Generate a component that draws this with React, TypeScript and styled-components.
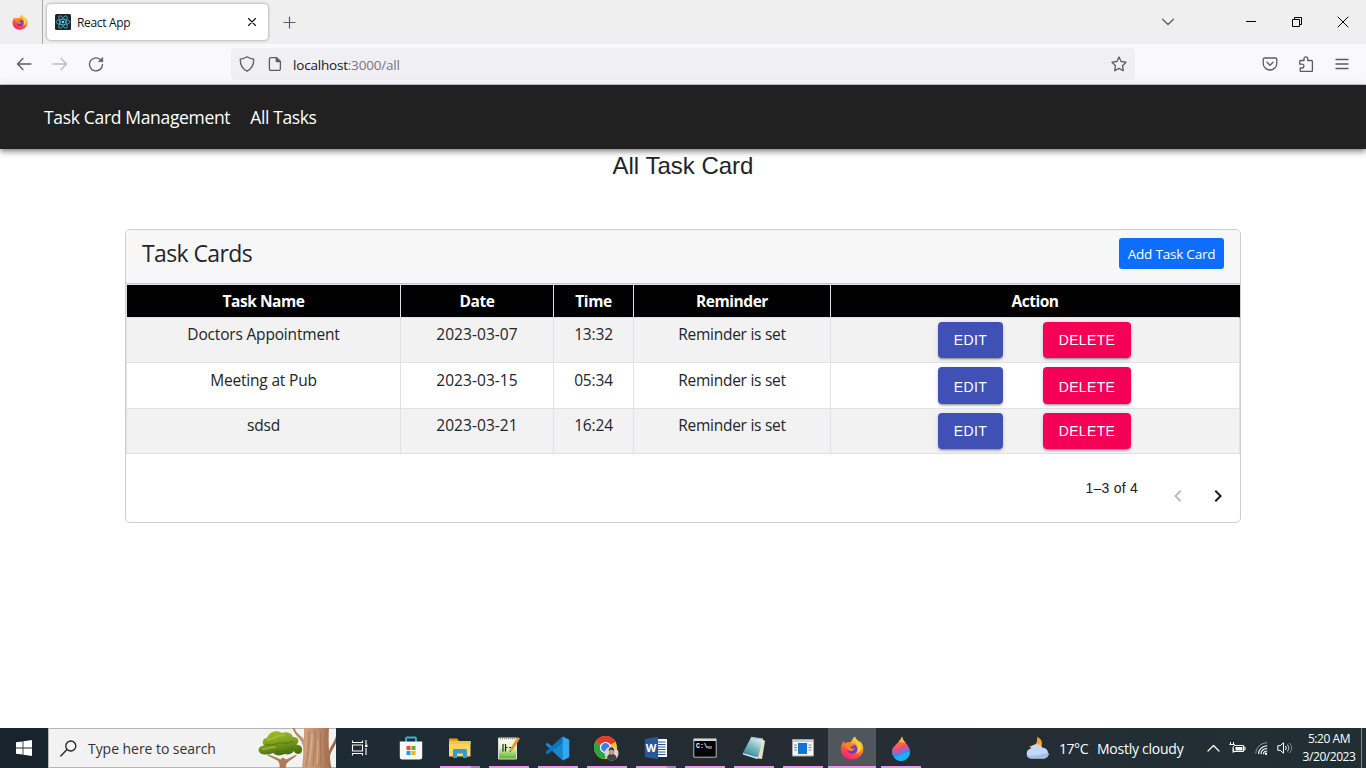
import React from 'react';
import styled, { createGlobalStyle, css } from 'styled-components';

const ui = "'Open Sans', 'Noto Sans', sans-serif";
const arial = "'Liberation Sans', Arial, sans-serif";

const GlobalStyle = createGlobalStyle`
  * { box-sizing: border-box; }
  body { margin: 0; background: #fff; font-family: ${ui}; overflow: hidden; }
  svg { display: block; flex: none; }
`;

const Screen = styled.div`
  width: 1366px;
  height: 768px;
  display: flex;
  flex-direction: column;
  background: #fff;
  overflow: hidden;
`;

/* ---------- browser chrome ---------- */
const TabStrip = styled.div`
  height: 44px;
  flex: none;
  display: flex;
  align-items: stretch;
  background: #efefef;
`;
const FirefoxView = styled.div`
  width: 43px;
  display: flex;
  align-items: center;
  padding-left: 12px;
  border-right: 1px solid #a9a9ab;
`;
const Tab = styled.div`
  width: 221px;
  height: 36px;
  margin: 4px 0 0 4px;
  padding: 0 11px 0 8px;
  display: flex;
  align-items: center;
  background: #fff;
  border-radius: 4px;
  box-shadow: 0 0 3px rgba(0, 0, 0, 0.45);
`;
const TabTitle = styled.span`
  flex: 1;
  margin-left: 6px;
  font-size: 12px;
  letter-spacing: -0.32px;
  color: #15141a;
`;
const StripButton = styled.div<{ $left: number }>`
  display: flex;
  align-items: center;
  margin-left: ${(p) => p.$left}px;
`;
const WindowControls = styled.div`
  margin-left: auto;
  display: flex;
  align-items: center;
  padding-right: 17px;
  gap: 34px;
`;
const ListTabs = styled.div`
  margin-right: 36px;
`;
const Toolbar = styled.div`
  height: 41px;
  flex: none;
  display: flex;
  align-items: center;
  background: #f9f9fb;
  border-bottom: 1px solid #ccccce;
`;
const NavButtons = styled.div`
  width: 231px;
  display: flex;
  gap: 20px;
  padding-left: 16px;
`;
const UrlBar = styled.div`
  width: 904px;
  height: 32px;
  display: flex;
  align-items: center;
  padding: 0 8px;
  border-radius: 4px;
  background: #f0f0f4;
`;
const Url = styled.span`
  flex: 1;
  margin-left: 11px;
  padding-top: 1px;
  font-size: 13.5px;
  letter-spacing: -0.2px;
  color: #76757c;
  b { font-weight: 400; color: #15141a; }
`;
const ToolIcons = styled.div`
  margin-left: auto;
  padding-right: 16px;
  display: flex;
  gap: 20px;
`;

/* ---------- page ---------- */
const Page = styled.main`
  flex: 1;
  min-height: 0;
  display: flex;
  flex-direction: column;
  align-items: center;
`;
const AppBar = styled.nav`
  width: 100%;
  height: 64px;
  flex: none;
  display: flex;
  align-items: center;
  gap: 20px;
  padding: 0 44px 0;
  background: #212121;
  box-shadow: 0 2px 4px -1px rgba(0, 0, 0, 0.3), 0 4px 5px rgba(0, 0, 0, 0.2), 0 1px 10px rgba(0, 0, 0, 0.14);
`;
const NavLink = styled.a<{ $track: number }>`
  color: #fff;
  font-size: 17.5px;
  letter-spacing: ${(p) => p.$track}px;
  white-space: nowrap;
`;
const PageTitle = styled.h1`
  margin: 2px 0 0;
  height: 30px;
  font: 400 24px/30px ${arial};
  color: #212529;
`;
const Card = styled.section`
  width: 1116px;
  height: 294px;
  margin-top: 48px;
  border: 1px solid #cfcfcf;
  border-radius: 5px;
  background: #fff;
  overflow: hidden;
`;
const CardHeader = styled.header`
  height: 54px;
  display: flex;
  justify-content: space-between;
  align-items: flex-start;
  padding: 8px 16px;
  background: #f7f7f7;
  border-bottom: 1px solid #c8c8c8;
`;
const CardTitle = styled.h2`
  margin: 0;
  font-weight: 400;
  font-size: 23px;
  line-height: 31px;
  letter-spacing: -0.6px;
  color: #212529;
`;
const AddButton = styled.button`
  width: 105px;
  height: 31px;
  padding: 0;
  border: 0;
  border-radius: 3px;
  background: #0d6efd;
  color: #fff;
  font-family: ${ui};
  font-size: 13.5px;
  line-height: 32px;
  letter-spacing: -0.2px;
`;
const Table = styled.table`
  width: 1114px;
  table-layout: fixed;
  border-collapse: separate;
  border-spacing: 0;
  border-top: 1px solid #dee2e6;
  border-left: 1px solid #dee2e6;
  color: #212529;
`;
const HeadCell = styled.th`
  height: 33px;
  padding: 0;
  background: #000;
  color: #fff;
  border-right: 1px solid #dee2e6;
  border-bottom: 1px solid #dee2e6;
  font-size: 15.5px;
  line-height: 32px;
  letter-spacing: -0.45px;
  &:last-child { border-right-color: #000; }
`;
const Row = styled.tr<{ $h: number; $striped: boolean }>`
  height: ${(p) => p.$h}px;
  background: ${(p) => (p.$striped ? '#f2f2f2' : '#fff')};
  & > td > span { display: block; padding-top: ${(p) => p.$h - 45}px; }
`;
const Cell = styled.td<{ $track?: number }>`
  padding: 4px 0 0;
  vertical-align: top;
  text-align: center;
  border-right: 1px solid #dee2e6;
  border-bottom: 1px solid #dee2e6;
  font-size: 15.5px;
  line-height: 25px;
  letter-spacing: ${(p) => p.$track ?? -0.18}px;
`;
const Actions = styled.div`
  display: flex;
  justify-content: center;
  gap: 40px;
  padding-right: 1px;
`;
const ActionButton = styled.button<{ $h: number; $danger?: boolean }>`
  width: ${(p) => (p.$danger ? 88 : 65)}px;
  height: ${(p) => p.$h}px;
  padding: ${(p) => (p.$h - 36) * 2}px 0 0;
  border: 0;
  border-radius: 4px;
  background: ${(p) => (p.$danger ? '#f50057' : '#3f51b5')};
  color: #fff;
  font: 400 14px/20px ${arial};
  letter-spacing: 0.35px;
  box-shadow: 0 3px 1px -2px rgba(0, 0, 0, 0.2), 0 2px 2px rgba(0, 0, 0, 0.14), 0 1px 5px rgba(0, 0, 0, 0.12);
`;
const Pagination = styled.div`
  height: 68px;
  display: flex;
  align-items: center;
  padding-right: 10px;
  justify-content: flex-end;
`;
const PageRange = styled.span`
  font: 400 14px/20px ${arial};
  letter-spacing: 0.25px;
  color: #212121;
  margin: 0 28px 0 0;
  padding-bottom: 1px;
`;
const PageArrows = styled.div`
  display: flex;
  gap: 16px;
  padding-top: 15px;
`;

/* ---------- taskbar ---------- */
const Taskbar = styled.footer`
  height: 40px;
  flex: none;
  display: flex;
  color: #fff;
  background: linear-gradient(90deg, #18232b 0, #1d2b34 26%, #242c33 50%, #262d35 68%, #202f33 100%);
`;
const Start = styled.div`
  width: 48px;
  display: flex;
  align-items: center;
  justify-content: center;
`;
const Search = styled.div`
  width: 288px;
  display: flex;
  align-items: center;
  padding-left: 11px;
  background: #f2f2f2;
  border: 1px solid #b5b5b5;
  border-right: 0;
  color: #333;
  font-size: 14px;
  letter-spacing: -0.05px;
  span { margin-left: 11px; flex: 1; white-space: nowrap; }
`;
const SearchArt = styled.div`
  width: 80px;
  height: 40px;
`;
const TaskSlot = styled.div<{ $running?: boolean; $active?: boolean; $first?: boolean; $stacked?: boolean }>`
  width: ${(p) => (p.$first ? 50 : p.$active ? 48 : 49)}px;
  flex: none;
  margin-left: ${(p) => (p.$active ? 1 : 0)}px;
  display: flex;
  flex-direction: column;
  align-items: center;
  background: ${(p) => (p.$active ? '#50565b' : 'transparent')};
  & > div { height: 38px; display: flex; align-items: center; padding: 2px ${(p) => (p.$first ? 2 : 0)}px 0 0; }
  &::after {
    content: '';
    width: ${(p) => (p.$active ? 48 : 40)}px;
    height: 2px;
    ${(p) =>
      p.$running &&
      css`background: ${p.$stacked ? 'linear-gradient(90deg, #e598ec 31px, #b57abc 31px)' : '#e598ec'};`}
  }
`;
const Weather = styled.div`
  margin-left: auto;
  width: 182px;
  display: flex;
  align-items: center;
  font-size: 14px;
  white-space: nowrap;
`;
const Temp = styled.span`
  margin-left: 8px;
  width: 38px;
  letter-spacing: -0.45px;
`;
const Sky = styled.span`
  letter-spacing: -0.25px;
`;
const Tray = styled.div`
  display: flex;
  align-items: center;
  gap: 9px;
  width: 87px;
`;
const Clock = styled.div`
  width: 67px;
  display: flex;
  flex-direction: column;
  align-items: center;
  font-size: 12px;
  line-height: 18px;
  padding: 2px 0 0 3px;
  letter-spacing: -0.45px;
`;
const ShowDesktop = styled.div`
  width: 5px;
  border-left: 1px solid #7c868a;
`;

/* ---------- icons ---------- */
const FirefoxLogo = ({ size, id }: { size: number; id: string }) => (
  <svg width={size} height={size} viewBox="0 0 24 24">
    <defs>
      <linearGradient id={id} x1="0.8" y1="0" x2="0.3" y2="1">
        <stop offset="0" stopColor="#ffe640" />
        <stop offset="0.4" stopColor="#ff9a2a" />
        <stop offset="0.7" stopColor="#ff4a44" />
        <stop offset="1" stopColor="#f0208a" />
      </linearGradient>
    </defs>
    <path d="M4 5 5 8C7 6 9 6 11 6 12 3 14 1 15 .5 15.500 3 18 4 19.500 6L20 5C23 8 24 12 23 15.500 21.500 20.500 17 23.500 12 23.500 5.500 23.500.8 19 .8 13 .8 10 2 7 4 5z" fill={`url(#${id})`} />
    <path d="M14.500 1C13 5 17.500 6.500 18 12c.2 2-.4 4-2 5.500 4-1 6-4 5-8.500C20 6.500 16 5 14.500 1z" fill="#ffd233" />
    <circle cx="12.200" cy="13" r="5" fill="#6f3ec8" />
    <path d="M5 8c1.500-2 4.500-2 6-1 1 .8 2 1.300 3.500 1.500C14 10 12.500 10 11 10.500c-.6.500-.5 1.500.4 2 1.300.5 2.300-.5 3.500 0-1 2.500-4.500 3.500-6.500 1.500C6.500 12.500 5 10.500 5 8z" fill="#ff8127" />
  </svg>
);

const ReactIcon = () => (
  <svg width="16" height="16" viewBox="0 0 16 16">
    <rect width="16" height="16" rx="1.500" fill="#20232a" />
    <g fill="none" stroke="#4db8d0" strokeWidth="0.8">
      <ellipse cx="8" cy="8" rx="7" ry="2.700" />
      <ellipse cx="8" cy="8" rx="7" ry="2.700" transform="rotate(60 8 8)" />
      <ellipse cx="8" cy="8" rx="7" ry="2.700" transform="rotate(120 8 8)" />
    </g>
    <circle cx="8" cy="8" r="1.300" fill="#61dafb" />
  </svg>
);

const Line = ({ d, w = 16, h = 16, color = '#5b5b66', sw = 1.3 }: { d: string; w?: number; h?: number; color?: string; sw?: number }) => (
  <svg width={w} height={h} viewBox={`0 0 ${w} ${h}`} fill="none" stroke={color} strokeWidth={sw} strokeLinecap="round" strokeLinejoin="round">
    <path d={d} />
  </svg>
);

const Reload = () => (
  <svg width="16" height="16" viewBox="0 0 16 16" fill="none" stroke="#5b5b66" strokeWidth="1.3" strokeLinecap="round">
    <path d="M13 4.200A6.500 6.500 0 1 0 14.500 8.500" />
    <path d="M14.800 1.500v4.200h-4.200z" fill="#5b5b66" strokeWidth=".5" strokeLinejoin="round" />
  </svg>
);

const PageIcon = () => (
  <svg width="14" height="16" viewBox="0 0 14 16" fill="none" stroke="#5b5b66" strokeWidth="1.3" strokeLinejoin="round">
    <path d="M3 1.600h5.500L12.400 5.500v7.300a1.600 1.600 0 0 1-1.600 1.600H3a1.600 1.600 0 0 1-1.600-1.600V3.200A1.600 1.600 0 0 1 3 1.600z" />
    <path d="M8.300 1.600v4h4z" fill="#5b5b66" />
  </svg>
);

const Windows = () => (
  <svg width="16" height="16" viewBox="0 0 16 16" fill="#fff">
    <path d="M0 2.300 6.600 1.400v6.200H0zM7.400 1.300 16 0v7.600H7.400zM0 8.400h6.600v6.200L0 13.700zM7.400 8.400H16V16l-8.600-1.300z" />
  </svg>
);

const TreeArt = () => (
  <svg width="80" height="40" viewBox="0 0 80 40">
    <defs>
      <linearGradient id="trunk" x1="0" x2="1">
        <stop offset="0" stopColor="#a97656" />
        <stop offset="0.3" stopColor="#cda17f" />
        <stop offset="0.6" stopColor="#bd8c68" />
        <stop offset="1" stopColor="#93603f" />
      </linearGradient>
      <linearGradient id="leaves" x1="0" y1="0" x2="0.3" y2="1">
        <stop offset="0" stopColor="#a6bf2e" />
        <stop offset="0.5" stopColor="#83a41f" />
        <stop offset="1" stopColor="#4b7410" />
      </linearGradient>
    </defs>
    <path d="M23.500 40c.5-5-.5-7-4-8.500l-8-4 1-1 8 3 4 2 2-2 4 2 9-4.500 1.500.5-7 5c-3 2-4.500 4-4 7.500z" fill="#b07a56" />
    <path d="M4 25C1 22 3 18 8 17.500 5 13 8 10 11 10 13 4 20 1 26 5c4-2 10 0 11 4 6 0 7 5 3 8 5-1 8 4 5 8-3 2-6 1-7-2-2 3-6 4-9 3-5 2-9 2-12-1-5 2-10 2-13 0z" fill="url(#leaves)" />
    <path d="M12 12c4-2 6-1 9-4 3-1 5 0 7-1M7 21c5 0 7-2 12-2" stroke="#b8cd42" strokeWidth="2" fill="none" opacity=".5" strokeLinecap="round" />
    <path d="M10 16.500c5 1 9 1 14-2 4 1 8 1 13-1M20 23c4 1 10 1 17-4" stroke="#4f7a12" strokeWidth="1.600" fill="none" opacity=".6" strokeLinecap="round" />
    <path d="M46 40c1-8 1.500-14 1.200-21C46 11 39 8 36.500 0h2C40 5 45 8 48 11V0h25c-.5 8-.5 15 0 23 2-6 5-8 7-15v7c-2 5-5 8-6 13 0 4 .5 8 1.500 12z" fill="url(#trunk)" />
    <path d="M53 3c0 12-1 24-3 36M59 2c1 12-1 22-2 36M65 3c-2 10 1 22-1 35M70 2c-1 12-1 22 1 36" stroke="#a0704e" strokeWidth="1" fill="none" opacity=".8" />
    <path d="M56 6c0 10-1 18-3 28M62 12c0 8 0 14-1 24" stroke="#e3bb98" strokeWidth="1.200" fill="none" opacity=".7" />
  </svg>
);

const TaskView = () => (
  <svg width="18" height="18" viewBox="0 0 18 18" fill="none" stroke="#fff" strokeWidth="1.1">
    <path d="M1.500 1.500v2h10v-2M1.500 16.500v-2h10v2M1.500 6h10v6h-10zM15 1v4M15 9v7" />
    <path d="M14 5.500h2.500V8H14z" fill="#fff" stroke="none" />
  </svg>
);
const Store = () => (
  <svg width="24" height="24" viewBox="0 0 24 24">
    <path d="M7 6V2.500A1 1 0 0 1 8 1.500h8a1 1 0 0 1 1 1V6" fill="none" stroke="#34b5dc" strokeWidth="1.8" />
    <path d="M.8 5.500h22.400V21a2.500 2.500 0 0 1-2.500 2.500H3.300A2.500 2.500 0 0 1 .8 21z" fill="#f7f8f9" />
    <path d="M7.500 10h4v4h-4z" fill="#f25022" /><path d="M12.500 10h4v4h-4z" fill="#6fae12" />
    <path d="M7.500 15h4v4h-4z" fill="#16a0e6" /><path d="M12.500 15h4v4h-4z" fill="#fbb403" />
  </svg>
);
const Explorer = () => (
  <svg width="24" height="22" viewBox="0 0 24 22">
    <path d="M1 2.500A1 1 0 0 1 2 1.500h7l2 2.500H1z" fill="#e3a21c" />
    <path d="M1 4h21.500v15.500H1z" fill="#fbd663" />
    <path d="M1 4h21.500v3H1z" fill="#f6c544" />
    <path d="M5 21v-7.500a1.500 1.500 0 0 1 1.500-1.500h11a1.500 1.500 0 0 1 1.500 1.500V21h-4v-4.500H9V21z" fill="#3b97d2" />
  </svg>
);
const NotepadPlus = () => (
  <svg width="24" height="24" viewBox="0 0 24 24">
    <defs><linearGradient id="npp" x1="0" y1="0" x2="0" y2="1"><stop offset="0" stopColor="#f8fbf5" /><stop offset=".45" stopColor="#e6f5c8" /><stop offset="1" stopColor="#4fb616" /></linearGradient></defs>
    <path d="M1.500 2h18v21h-18z" fill="url(#npp)" stroke="#dcdcdc" />
    <path d="M3 2.500h15" stroke="#888" strokeWidth="1.500" strokeDasharray="1 1" />
    <path d="M6 8v7.500M8.500 8v7.500M8.500 11.500h2M12 11.500h2" stroke="#222" strokeWidth="1.200" />
    <path d="m20.500 1 2.500 1.500-7.500 12-2.800 1.500.3-3z" fill="#e59b31" />
    <path d="m12.700 16 .2-1.500 1.200.7z" fill="#333" />
  </svg>
);
const VsCode = () => (
  <svg width="25" height="25" viewBox="0 0 24 24">
    <path d="M17 .5 6.800 9.800 2.500 6.500.7 7.500v1.200L17 23.500l1-4V5z" fill="#1788d0" />
    <path d="M.7 16.300 2.500 17.500 17 6.500V.5L.7 15z" fill="#0f72bb" />
    <path d="M17 .5 23.300 3.500v17L17 23.500z" fill="#35a7ee" />
  </svg>
);
const Chrome = () => (
  <svg width="27" height="26" viewBox="0 0 27 26">
    <circle cx="12.500" cy="12.500" r="11.500" fill="#fbc116" />
    <path d="M12.500 12.500 2.500 6.750A11.500 11.500 0 0 1 22.500 6.750z" fill="#e33b2e" />
    <path d="M12.500 12.500 2.500 6.750a11.500 11.500 0 0 0 9 17.200l5-9z" fill="#2ba24c" />
    <path d="M12.500 1a11.500 11.500 0 0 1 10 5.800h-10z" fill="#e33b2e" />
    <circle cx="12.500" cy="12.500" r="5.600" fill="#fff" /><circle cx="12.500" cy="12.500" r="4.400" fill="#3b7ded" />
    <circle cx="18.500" cy="18.500" r="7" fill="#d9d4cb" />
    <path d="M14 24c0-4 2-5 4.500-5s5 1 5 4.500a7 7 0 0 1-9.500.5z" fill="#40434b" />
    <ellipse cx="18.500" cy="16.700" rx="2.600" ry="3.500" fill="#c69a80" /><path d="M15.700 16c0-5 5.600-5 5.600 0-2-2-4-2-5.600 0zM16 18q2.500 4 5 0l-1 3h-3z" fill="#35302e" />
  </svg>
);
const WordText = styled.text`
  font: 700 11px ${ui};
  fill: #fff;
`;
const Word = () => (
  <svg width="24" height="24" viewBox="0 0 24 24">
    <path d="M12 3h11v18H12z" fill="#fff" />
    <path d="M14 6h7.500M14 8.500h7.500M14 11h7.500M14 13.500h7.500M14 16h7.500M14 18.500h7.500" stroke="#2b5797" strokeWidth="1.200" />
    <path d="M.8 3 14 .8v22.400L.8 21z" fill="#2a5699" />
    <WordText x="1.700" y="16">W</WordText>
  </svg>
);
const CmdText = styled.text`
  font: 700 6.5px 'Liberation Mono', monospace;
  fill: #fff;
`;
const Cmd = () => (
  <svg width="24" height="20" viewBox="0 0 24 20">
    <path d="M.8.800h22.400v18.400H.8z" fill="#050505" stroke="#b9b9b9" />
    <path d="M1 1h22v2H1z" fill="#d4d4d4" />
    <CmdText x="3" y="9.500">C:\_</CmdText>
    <path d="M14 9h5" stroke="#ddd" />
  </svg>
);
const Notepad = () => (
  <svg width="24" height="24" viewBox="0 0 24 24">
    <defs><linearGradient id="pad" x1=".8" y1="0" x2=".2" y2="1"><stop offset="0" stopColor="#e2f4f5" /><stop offset=".5" stopColor="#78b7c1" /><stop offset="1" stopColor="#287b8d" /></linearGradient></defs>
    <path d="m20 3 3 2-3 18-7-1z" fill="#e8dfc2" />
    <path d="M9 1.500 21 3l-5 18.500L.8 17z" fill="url(#pad)" />
    <path d="M.8 17 16 21.500l-.8 1.500L1 18.500z" fill="#dceced" /><path d="m9 1.500 12 1.800" stroke="#b9c5c7" strokeWidth="1.500" />
  </svg>
);
const RunApp = () => (
  <svg width="22" height="18" viewBox="0 0 22 18">
    <path d="M.500.500h21v16.500H.500z" fill="#f5f5f5" stroke="#a5a5a5" />
    <path d="M1 1h20v2H1z" fill="#ccc" />
    <path d="M6 4h9v11H6z" fill="#0d76d3" />
    <path d="M2 6h3M2 8.500h3M2 11h3M16.500 6h3M16.500 8.500h3M16.500 11h3" stroke="#858585" />
  </svg>
);
const Drop = () => (
  <svg width="20" height="25" viewBox="0 0 20 25">
    <defs><clipPath id="drop"><path d="M11 .5C12 6 19 10 19 16a9 9 0 0 1-18 0C1 10 8 8 11 .5z" /></clipPath></defs>
    <g clipPath="url(#drop)">
      <path d="M0 0h20v25H0z" fill="#2496ed" />
      <path d="M0 0h20v8L0 15z" fill="#ff604d" />
      <path d="M7 0h13v8L8 6z" fill="#ffb72c" />
      <path d="M0 14c7 3 10-5 20-5v6C12 14 9 22 0 18z" fill="#8e6acb" />
      <path d="M0 13C7 14 11 7 20 8v3C12 10 8 18 0 15z" fill="#e54f83" />
      <path d="M0 22c8 0 10-6 20-6v9H0z" fill="#14b3f5" />
    </g>
  </svg>
);
const WeatherIcon = () => (
  <svg width="26" height="24" viewBox="0 0 26 24">
    <path d="M12 1C13 6 11 10 4.500 10c2 5 9 5 11.500 1C18.500 7 16 2 12 1z" fill="#f5a623" />
    <path d="M6 22.500a5 5 0 0 1-.5-9.800 6.500 6.500 0 0 1 12-1 5.600 5.600 0 0 1 2 10.800z" fill="#c4d8f6" />
    <path d="M1.500 19c5 2 16-1 22.500-2a5.600 5.600 0 0 1-5 5.500H6A5 5 0 0 1 1.500 19z" fill="#a3bdea" />
  </svg>
);
const Battery = () => (
  <svg width="17" height="14" viewBox="0 0 17 14" fill="none" stroke="#fff">
    <path d="M5.500 4.500h9v6H4.500v-3M14.500 6h1.500v3h-1.500M1.500 1v2M4.500 1v2M.5 3.500h5v1L4 6v5.500H4.500" />
    <path d="M6.500 6h7v3.500h-7z" fill="#fff" stroke="none" />
  </svg>
);
const Wifi = () => (
  <svg width="13" height="13" viewBox="0 0 13 13" fill="none" stroke="#fff">
    <path d="M.8 11.500C1 5.500 5.500 1 12.200.8" stroke="#8e999b" />
    <path d="M3.500 12C3.500 7.500 7 4 12.200 3.700M6 12.200C6 9 8.500 6.700 12.200 6.500M8.500 12.200c0-2 1.500-3.200 3.700-3.200" strokeWidth="1.100" />
    <circle cx="11" cy="11.700" r="1.200" fill="#fff" stroke="none" />
  </svg>
);
const Volume = () => (
  <svg width="17" height="14" viewBox="0 0 17 14" fill="none" stroke="#fff">
    <path d="M.8 4.700h2.400L6.500 1.800v10.400L3.200 9.300H.8z" />
    <path d="M8.500 5q1.500 2 0 4" /><path d="M10.500 3.500q3 3.500 0 7" stroke="#c1c7c9" /><path d="M12.500 2q4.500 5 0 10" stroke="#78868a" />
  </svg>
);

const rows = [
  { name: 'Doctors Appointment', date: '2023-03-07', time: '13:32', h: 45 },
  { name: 'Meeting at Pub', date: '2023-03-15', time: '05:34', h: 46 },
  { name: 'sdsd', date: '2023-03-21', time: '16:24', h: 45 },
];

const apps = [
  { key: 'store', icon: <Store /> },
  { key: 'explorer', icon: <Explorer />, running: true, stacked: true },
  { key: 'npp', icon: <NotepadPlus />, running: true },
  { key: 'code', icon: <VsCode />, running: true },
  { key: 'chrome', icon: <Chrome />, running: true },
  { key: 'word', icon: <Word />, running: true, stacked: true },
  { key: 'cmd', icon: <Cmd />, running: true },
  { key: 'notepad', icon: <Notepad />, running: true },
  { key: 'run', icon: <RunApp />, running: true },
  { key: 'firefox', icon: <FirefoxLogo size={24} id="ffTask" />, running: true, active: true },
  { key: 'drop', icon: <Drop />, running: true },
];

export default function App() {
  return (
    <Screen>
      <GlobalStyle />
      <TabStrip>
        <FirefoxView><FirefoxLogo size={16} id="ffView" /></FirefoxView>
        <Tab>
          <ReactIcon />
          <TabTitle>React App</TabTitle>
          <Line w={10} h={10} d="M1.500 1.500l7 7M8.500 1.500l-7 7" color="#15141a" sw={1.1} />
        </Tab>
        <StripButton $left={15}><Line w={13} h={13} d="M6.500 1v11M1 6.500h11" sw={1.2} /></StripButton>
        <WindowControls>
          <ListTabs><Line w={14} h={8} d="M1.500 1.300l5.500 5.200 5.500-5.200" /></ListTabs>
          <Line w={12} h={12} d="M1.500 5.500h9" color="#000" sw={1} />
          <svg width="12" height="12" viewBox="0 0 12 12" fill="none" stroke="#000">
            <path d="M1.500 3.500h7v7h-7zM3.500 3.500v-2h7v7h-2" />
          </svg>
          <Line w={12} h={12} d="M1 1l10 10M11 1l-10 10" color="#000" sw={1} />
        </WindowControls>
      </TabStrip>
      <Toolbar>
        <NavButtons>
          <Line d="M15 8H1.500M7 2.500L1.500 8 7 13.500" />
          <Line w={16} d="M1 8h13.500M9 2.500L14.500 8 9 13.500" color="#bcbcc1" />
          <Reload />
        </NavButtons>
        <UrlBar>
          <Line d="M8 .8c2 1.500 4 2 6.700 2.300C15 9 12.500 13 8 15.200 3.500 13 1 9 1.300 3.100 4 2.800 6 2.300 8 .8z" />
          <StripButton $left={13}><PageIcon /></StripButton>
          <Url><b>localhost</b>:3000/all</Url>
          <Line d="M8 1l2.100 4.500 4.900.7-3.500 3.500.8 5L8 12.400 3.700 14.700l.8-5L1 6.200l4.900-.7z" />
        </UrlBar>
        <ToolIcons>
          <Line d="M2.500 2h11a1.300 1.300 0 0 1 1.300 1.300v3.900a6.800 6.800 0 0 1-13.600 0V3.300A1.300 1.300 0 0 1 2.500 2zM5 6.200l3 3 3-3" />
          <Line d="M2.500 4.500H6V2.700a1.800 1.800 0 0 1 3.700 0v1.800h3.700a1 1 0 0 1 1 1v9.200a.8.8 0 0 1-.8.800H3a.8.8 0 0 1-.8-.8V12H4a1.900 1.900 0 0 0 0-3.800H1.700V5.500a1 1 0 0 1 .8-1z" />
          <Line d="M2 3.500h12M2 8h12M2 12.500h12" />
        </ToolIcons>
      </Toolbar>

      <Page>
        <AppBar>
          <NavLink $track={-0.33}>Task Card Management</NavLink>
          <NavLink $track={-0.38}>All Tasks</NavLink>
        </AppBar>
        <PageTitle>All Task Card</PageTitle>
        <Card>
          <CardHeader>
            <CardTitle>Task Cards</CardTitle>
            <AddButton>Add Task Card</AddButton>
          </CardHeader>
          <Table>
            <colgroup>
              <col width="274" /><col width="153" /><col width="80" /><col width="197" /><col width="409" />
            </colgroup>
            <thead>
              <tr>
                {['Task Name', 'Date', 'Time', 'Reminder', 'Action'].map((h) => <HeadCell key={h}>{h}</HeadCell>)}
              </tr>
            </thead>
            <tbody>
              {rows.map((r, i) => (
                <Row key={r.name} $h={r.h} $striped={i % 2 === 0}>
                  <Cell><span>{r.name}</span></Cell>
                  <Cell $track={0.05}><span>{r.date}</span></Cell>
                  <Cell><span>{r.time}</span></Cell>
                  <Cell $track={-0.28}><span>Reminder is set</span></Cell>
                  <Cell>
                    <Actions>
                      <ActionButton $h={r.h - 9}>EDIT</ActionButton>
                      <ActionButton $h={r.h - 9} $danger>DELETE</ActionButton>
                    </Actions>
                  </Cell>
                </Row>
              ))}
            </tbody>
          </Table>
          <Pagination>
            <PageRange>1–3 of 4</PageRange>
            <PageArrows>
              <svg width="24" height="24" viewBox="0 0 24 24" fill="#bdbdbd"><path d="M15.410 7.410 14 6l-6 6 6 6 1.410-1.410L10.830 12z" /></svg>
              <svg width="24" height="24" viewBox="0 0 24 24" fill="#1c1c1c"><path d="M10 6 8.590 7.410 13.170 12l-4.580 4.590L10 18l6-6z" /></svg>
            </PageArrows>
          </Pagination>
        </Card>
      </Page>

      <Taskbar>
        <Start><Windows /></Start>
        <Search>
          <Line w={17} h={17} d="M15.800 6A5 5 0 1 1 5.800 6 5 5 0 1 1 15.800 6zM7 9.500L.8 16" color="#222" />
          <span>Type here to search</span>
          <SearchArt><TreeArt /></SearchArt>
        </Search>
        <TaskSlot $first><div><TaskView /></div></TaskSlot>
        {apps.map((a) => (
          <TaskSlot key={a.key} $running={a.running} $active={a.active} $stacked={a.stacked}>
            <div>{a.icon}</div>
          </TaskSlot>
        ))}
        <Weather>
          <WeatherIcon />
          <Temp>17°C</Temp>
          <Sky>Mostly cloudy</Sky>
        </Weather>
        <Tray>
          <Line w={13} h={8} d="M1 7l5.500-5.500L12 7" color="#fff" />
          <Battery />
          <Wifi />
          <Volume />
        </Tray>
        <Clock><span>5:20 AM</span><span>3/20/2023</span></Clock>
        <ShowDesktop />
      </Taskbar>
    </Screen>
  );
}
